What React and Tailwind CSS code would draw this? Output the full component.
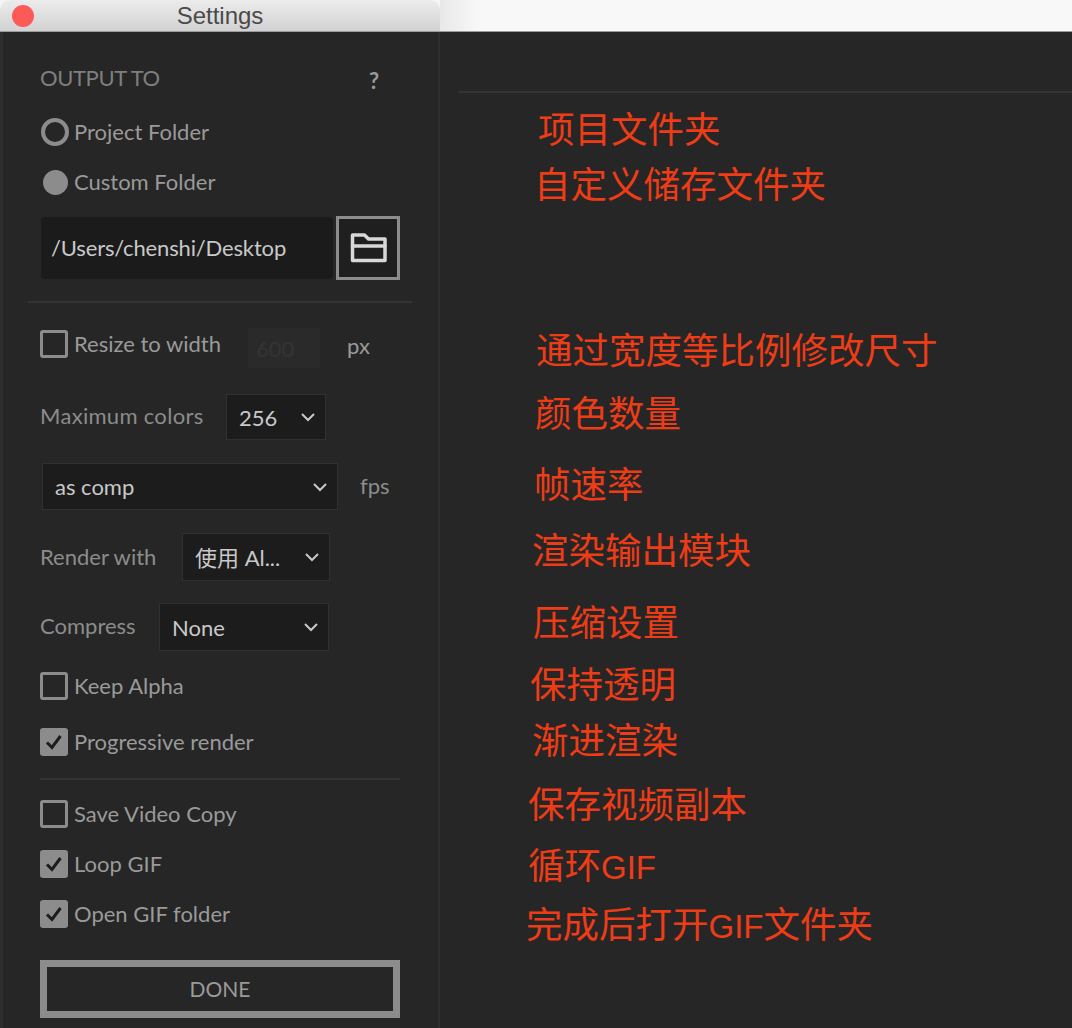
import React from 'react';

const Gif = () => <span className="text-[33px]">GIF</span>;

const notes = [
  { id: 'project', text: '项目文件夹', className: 'mt-[13px] ml-[98px]' },
  { id: 'custom', text: '自定义储存文件夹', className: 'mt-[5px] ml-[94px]' },
  { id: 'resize', text: '通过宽度等比例修改尺寸', className: 'mt-[116px] ml-[96px]' },
  { id: 'colors', text: '颜色数量', className: 'mt-[13px] ml-[95px]' },
  { id: 'fps', text: '帧速率', className: 'mt-[21px] ml-[94px]' },
  { id: 'render', text: '渲染输出模块', className: 'mt-[16px] ml-[92px]' },
  { id: 'compress', text: '压缩设置', className: 'mt-[22px] ml-[93px]' },
  { id: 'alpha', text: '保持透明', className: 'mt-[12px] ml-[90px]' },
  { id: 'progressive', text: '渐进渲染', className: 'mt-[6px] ml-[92px]' },
  { id: 'video', text: '保存视频副本', className: 'mt-[14px] ml-[88px]' },
  { id: 'loop', text: <>循环<Gif /></>, className: 'mt-[11px] ml-[88px]' },
  { id: 'open', text: <>完成后打开<Gif />文件夹</>, className: 'mt-[9px] ml-[86px]' },
];

const Check = ({ checked, label, className = '' }) => (
  <div className={`flex items-center h-[28px] ${className}`}>
    {checked ? (
      <span className="w-[28px] h-[28px] rounded-[3px] bg-[#8c8c8c] flex items-center justify-center">
        <svg width="20" height="20" viewBox="0 0 20 20" fill="none" stroke="#1d1d1d" strokeWidth="3">
          <path d="M3 10.5 L8 15.5 L16.5 4" />
        </svg>
      </span>
    ) : (
      <span className="w-[28px] h-[28px] rounded-[3px] border-[3px] border-[#8c8c8c]" />
    )}
    <span className="ml-[6px] pb-[2px] text-[#9a9a9a]">{label}</span>
  </div>
);

const Select = ({ value, className = '' }) => (
  <div className={`flex items-center justify-between pl-[12px] pr-[9px] bg-[#1c1c1c] border border-[#303030] text-[#c9c9c9] ${className}`}>
    <span>{value}</span>
    <svg width="16" height="10" viewBox="0 0 16 10" fill="none" stroke="#c9c9c9" strokeWidth="2">
      <path d="M2 2 L8 8 L14 2" />
    </svg>
  </div>
);

export default function App() {
  return (
    <div className="w-[1072px] h-[1028px] overflow-hidden flex bg-[#262626] text-[22px] font-['Lato','Noto_Sans_CJK_SC',sans-serif]">
      <div className="w-[440px] shrink-0 flex flex-col">
        <div className="h-[32px] shrink-0 bg-[#f4f4f4]">
          <div className="h-[32px] relative flex items-center justify-center rounded-t-[10px] bg-gradient-to-b from-[#ececec] to-[#d2d2d2] border-b border-[#9c9c9c] text-[#4a4a4a] text-[24px] font-['Liberation_Sans',sans-serif]">
            <span className="absolute left-[12px] top-[5px] w-[22px] h-[22px] rounded-full bg-[#fb5a56]" />
            Settings
          </div>
        </div>
        <div className="flex-1 flex flex-col pl-[37px] pr-[38px] border-l-[3px] border-r-[2px] border-[#2e2e2e]">
          <div className="mt-[31px] h-[30px] flex items-center justify-between pr-[21px] text-[#7f7f7f]">
            <span className="pb-[2px] tracking-[-0.4px]">OUTPUT TO</span>
            <span className="pt-[4px] text-[#9a9a9a] font-bold">?</span>
          </div>
          <div className="mt-[24px] h-[30px] flex items-center">
            <span className="w-[28px] h-[28px] ml-[1px] rounded-full border-[4px] border-[#8c8c8c]" />
            <span className="ml-[5px] pb-[2px] text-[#9a9a9a]">Project Folder</span>
          </div>
          <div className="mt-[20px] h-[30px] flex items-center">
            <span className="w-[25px] h-[25px] ml-[3px] rounded-full bg-[#8c8c8c]" />
            <span className="ml-[6px] pb-[2px] text-[#9a9a9a]">Custom Folder</span>
          </div>
          <div className="mt-[20px] h-[62px] flex ml-[1px] w-[360px]">
            <div className="w-[292px] h-[62px] rounded-[4px] bg-[#1b1b1b] pl-[10px] pb-[2px] tracking-[-0.15px] flex items-center text-[#c9c9c9]">
              /Users/chenshi/Desktop
            </div>
            <div className="w-[64px] h-[64px] -mt-[1px] ml-[3px] border-[3px] border-[#8c8c8c] bg-[#1f1f1f] flex items-center justify-center">
              <svg width="38" height="32" viewBox="0 0 38 32" fill="none" stroke="#d8d8d8" strokeWidth="3.5" strokeLinejoin="round" strokeLinecap="round">
                <path d="M3.5 28.5 V3 H15.5 L19.5 7 H36 V28.5 Z" />
                <path d="M3.5 14 H36" />
              </svg>
            </div>
          </div>
          <div className="mt-[22px] h-[2px] bg-[#333333] w-[384px] -ml-[12px]" />
          <div className="mt-[21px] h-[44px] flex items-center">
            <Check label="Resize to width" className="w-[208px] -mt-[4px]" />
            <div className="mt-[4px] w-[72px] h-[40px] bg-[#2a2a2a] text-[#343434] pl-[8px] flex items-center">600</div>
            <span className="ml-[27px] pb-[2px] text-[#9a9a9a]">px</span>
          </div>
          <div className="mt-[26px] h-[46px] flex items-center">
            <span className="w-[186px] pb-[4px] tracking-[0.3px] text-[#8c8c8c]">Maximum colors</span>
            <Select value="256" className="w-[100px] h-[46px]" />
          </div>
          <div className="mt-[23px] h-[47px] flex items-center ml-[2px]">
            <Select value="as comp" className="w-[296px] h-[47px]" />
            <span className="ml-[22px] pb-[2px] text-[#8c8c8c]">fps</span>
          </div>
          <div className="mt-[23px] h-[48px] flex items-center">
            <span className="w-[142px] pb-[2px] text-[#8c8c8c]">Render with</span>
            <Select value="使用 Al..." className="w-[148px] h-[48px]" />
          </div>
          <div className="mt-[22px] h-[48px] flex items-center">
            <span className="w-[119px] pb-[4px] text-[#8c8c8c]">Compress</span>
            <Select value="None" className="w-[170px] h-[48px]" />
          </div>
          <Check label="Keep Alpha" className="mt-[21px]" />
          <Check checked label="Progressive render" className="mt-[28px]" />
          <div className="mt-[22px] h-[2px] bg-[#333333] w-[360px]" />
          <Check label="Save Video Copy" className="mt-[20px]" />
          <Check checked label="Loop GIF" className="mt-[22px]" />
          <Check checked label="Open GIF folder" className="mt-[22px]" />
          <div className="mt-[32px] w-[360px] h-[58px] shrink-0 border-[7px] border-[#8c8c8c] flex items-center justify-center text-[#9a9a9a] text-[21px]">
            DONE
          </div>
        </div>
      </div>
      <div className="flex-1 flex flex-col min-w-0">
        <div className="h-[32px] shrink-0 bg-gradient-to-r from-[#e8e8e8] to-[#f8f8f8] to-[6%] border-b border-[#9c9c9c]" />
        <div className="mt-[59px] ml-[18px] h-[2px] shrink-0 bg-[#333333]" />
        {notes.map((note) => (
          <div key={note.id} className={`h-[50px] leading-[50px] text-[36.5px] whitespace-nowrap text-[#ee3c17] font-['Liberation_Sans','Noto_Sans_CJK_SC',sans-serif] ${note.className}`}>
            {note.text}
          </div>
        ))}
      </div>
    </div>
  );
}
